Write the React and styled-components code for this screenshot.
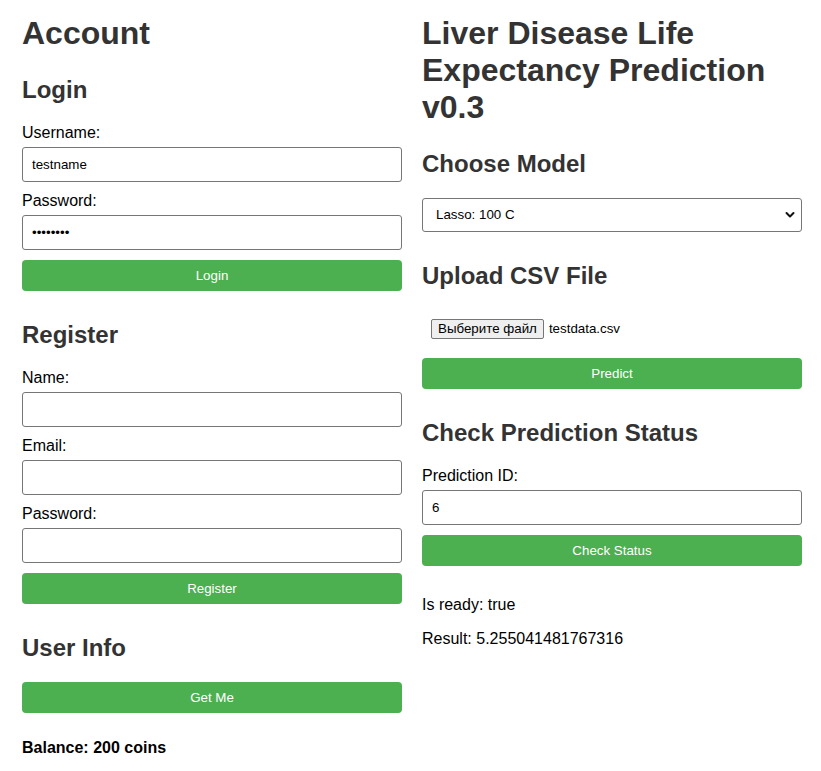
import React from "react";
import styled, { createGlobalStyle } from "styled-components";

const GlobalStyle = createGlobalStyle`
  html, body {
    margin: 0;
    padding: 0;
    background: #ffffff;
  }
  body {
    font-family: "Liberation Sans", Arial, sans-serif;
    font-size: 16px;
    color: #000;
  }
  * { box-sizing: border-box; }
`;

const Page = styled.div`
  display: grid;
  grid-template-columns: 380px 380px;
  column-gap: 20px;
  padding: 0 19px 0 22px;
  align-items: start;
`;

const Column = styled.div`
  display: flex;
  flex-direction: column;
`;

const Title = styled.h1`
  margin: 15px 0 23.5px;
  font-size: 32px;
  font-weight: 700;
  color: #333;
  line-height: normal;
`;

const Heading = styled.h2`
  margin: ${(p) => (p.$first ? "0" : "20px")} 0 20px;
  font-size: 24px;
  font-weight: 700;
  color: #333;
  line-height: normal;
`;

const Label = styled.label`
  display: block;
  margin-bottom: 5px;
  font-size: 16px;
  line-height: normal;
  color: #000;
`;

const TextInput = styled.input`
  display: block;
  width: 100%;
  height: 35px;
  margin: 0 0 10px;
  padding: 0 9px;
  border: 1px solid #767676;
  border-radius: 3px;
  font-family: "Liberation Sans", Arial, sans-serif;
  font-size: 13.33px;
  color: #000;
  background: #fff;
  outline: none;
`;

const SelectWrap = styled.div`
  position: relative;
  margin-bottom: 10px;
`;

const Select = styled.select`
  display: block;
  width: 100%;
  height: 34px;
  padding: 0 30px 0 13px;
  border: 1px solid #767676;
  border-radius: 3px;
  font-family: "Liberation Sans", Arial, sans-serif;
  font-size: 13.33px;
  color: #000;
  background: #fff;
  appearance: none;
  -webkit-appearance: none;
  outline: none;
`;

const Chevron = styled.svg`
  position: absolute;
  right: 7px;
  top: 50%;
  transform: translateY(-50%);
  pointer-events: none;
`;

const GreenButton = styled.button`
  display: block;
  width: 100%;
  margin: 0 0 10px;
  padding: 8px;
  border: none;
  border-radius: 4px;
  background: #4caf50;
  color: #fff;
  font-family: "Liberation Sans", Arial, sans-serif;
  font-size: 13.33px;
  line-height: normal;
  text-align: center;
  cursor: pointer;
`;

const FileRow = styled.div`
  display: flex;
  align-items: center;
  gap: 5px;
  padding: 9px 9px;
  margin-bottom: 10px;
  font-size: 13.33px;
`;

const FileButton = styled.button`
  height: 20px;
  padding: 0 6px;
  border: 1px solid #767676;
  border-radius: 2px;
  background: #efefef;
  color: #000;
  font-family: "Liberation Sans", Arial, sans-serif;
  font-size: 13.33px;
  line-height: 18px;
`;

const FileName = styled.span`
  font-size: 13.33px;
  color: #000;
`;

const StatusBox = styled.div`
  display: flex;
  flex-direction: column;
  gap: 16px;
  margin-top: 20px;
`;

const Text = styled.p`
  margin: 0;
  font-size: 16px;
  line-height: normal;
  color: #000;
`;

const Balance = styled.p`
  margin: 16px 0 0;
  font-size: 16px;
  font-weight: 700;
  line-height: normal;
  color: #000;
`;

function Field({ label, value, type = "text" }) {
  return (
    <>
      <Label>{label}</Label>
      <TextInput type={type} defaultValue={value} />
    </>
  );
}

export default function App() {
  return (
    <>
      <GlobalStyle />
      <Page>
        <Column>
          <Title>Account</Title>
          <Heading $first>Login</Heading>
          <Field label="Username:" value="testname" />
          <Field label="Password:" value="password" type="password" />
          <GreenButton>Login</GreenButton>

          <Heading>Register</Heading>
          <Field label="Name:" value="" />
          <Field label="Email:" value="" />
          <Field label="Password:" value="" type="password" />
          <GreenButton>Register</GreenButton>

          <Heading>User Info</Heading>
          <GreenButton>Get Me</GreenButton>
          <Balance>Balance: 200 coins</Balance>
        </Column>

        <Column>
          <Title>Liver Disease Life Expectancy Prediction v0.3</Title>
          <Heading $first>Choose Model</Heading>
          <SelectWrap>
            <Select defaultValue="lasso">
              <option value="lasso">Lasso: 100 C</option>
            </Select>
            <Chevron width="10" height="7" viewBox="0 0 10 7">
              <path
                d="M1.5 1.5 L5 5 L8.5 1.5"
                fill="none"
                stroke="#111"
                strokeWidth="2"
                strokeLinecap="round"
                strokeLinejoin="round"
              />
            </Chevron>
          </SelectWrap>

          <Heading>Upload CSV File</Heading>
          <FileRow>
            <FileButton>Выберите файл</FileButton>
            <FileName>testdata.csv</FileName>
          </FileRow>
          <GreenButton>Predict</GreenButton>

          <Heading>Check Prediction Status</Heading>
          <Field label="Prediction ID:" value="6" />
          <GreenButton>Check Status</GreenButton>
          <StatusBox>
            <Text>Is ready: true</Text>
            <Text>Result: 5.255041481767316</Text>
          </StatusBox>
        </Column>
      </Page>
    </>
  );
}
